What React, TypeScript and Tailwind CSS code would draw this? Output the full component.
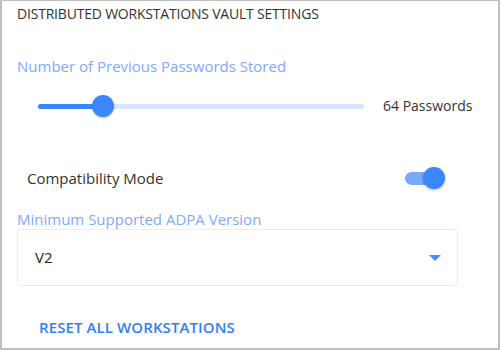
import React, { useState } from 'react';

const font = { fontFamily: '"Open Sans", "Noto Sans", sans-serif' };

const Slider: React.FC<{ value: number; max: number }> = ({ value, max }) => {
  const pct = (value / max) * 100;
  return (
    <div className="relative h-[22px] w-[326px] shrink-0 flex items-center">
      <div className="h-[5px] w-full rounded-full bg-[#d7e5ff]" />
      <div className="absolute left-0 h-[5px] rounded-full bg-[#3b86fb]" style={{ width: `${pct}%` }} />
      <div
        className="absolute h-[22px] w-[22px] -ml-[11px] rounded-full bg-[#3b86fb] shadow-[0_1px_2px_rgba(0,0,0,0.25)]"
        style={{ left: `${pct}%` }}
      />
    </div>
  );
};

const Toggle: React.FC<{ on: boolean; onChange: () => void }> = ({ on, onChange }) => (
  <button onClick={onChange} className="relative flex h-[22px] w-[42px] items-center">
    <div className="ml-[2px] h-[13px] w-[34px] rounded-full bg-[#78abff]" />
    <div
      className={`absolute top-0 h-[22px] w-[22px] rounded-full bg-[#3b86fb] shadow-[0_1px_3px_rgba(0,0,0,0.3)] ${on ? 'left-[20px]' : 'left-0'}`}
    />
  </button>
);

export default function App() {
  const [compat, setCompat] = useState(true);

  return (
    <div
      className="w-[500px] h-[350px] bg-white border-2 border-t border-[#c0c0c0] text-[#333] overflow-hidden"
      style={font}
    >
      <div className="pl-[15px] pr-[40px]">
        <h1 className="pt-[3px] text-[14px] leading-[20px] tracking-[-0.2px] text-[#333]">
          DISTRIBUTED WORKSTATIONS VAULT SETTINGS
        </h1>

        <div className="mt-[32px] text-[15px] leading-[20px] text-[#7fa8ff]">
          Number of Previous Passwords Stored
        </div>

        <div className="mt-[19px] flex h-[22px] items-center pl-[21px]">
          <Slider value={64} max={320} />
          <span className="ml-[19px] whitespace-nowrap text-[14px] leading-[20px] text-[#333]">64 Passwords</span>
        </div>

        <div className="mt-[50px] flex h-[22px] items-center pl-[10px]">
          <span className="text-[15px] leading-[20px] text-[#333]">Compatibility Mode</span>
          <div className="ml-auto mr-[13px]">
            <Toggle on={compat} onChange={() => setCompat(!compat)} />
          </div>
        </div>

        <div className="mt-[20px] text-[15px] leading-[20px] text-[#7fa8ff]">
          Minimum Supported ADPA Version
        </div>

        <div className="flex h-[57px] items-center rounded-[4px] border border-[#ececec] pl-[17px] pr-[16px]">
          <span className="text-[15px] text-[#222]">V2</span>
          <svg className="ml-auto" width="12" height="6" viewBox="0 0 12 6">
            <path d="M0 0 L12 0 L6 6 Z" fill="#4a8dff" />
          </svg>
        </div>

        <button className="mt-[31px] ml-[22px] h-[20px] whitespace-nowrap text-[15px] leading-[20px] font-semibold text-[#2f7ff7] tracking-[0.1px]">
          RESET ALL WORKSTATIONS
        </button>
      </div>
    </div>
  );
}
